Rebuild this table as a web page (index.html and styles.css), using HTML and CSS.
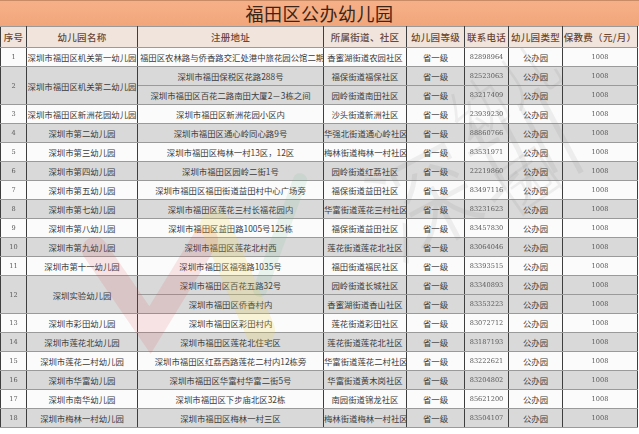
FILE: index.html
```html
<!DOCTYPE html>
<html lang="zh">
<head>
<meta charset="utf-8">
<title>福田区公办幼儿园</title>
<link rel="stylesheet" href="styles.css">
</head>
<body>
<div class="page">
  <div class="title">福田区公办幼儿园</div>
  <table class="grid">
    <colgroup>
      <col class="c-no"><col class="c-name"><col class="c-addr"><col class="c-street"><col class="c-level"><col class="c-tel"><col class="c-type"><col class="c-fee">
    </colgroup>
    <thead>
      <tr class="head">
        <th>序号</th><th>幼儿园名称</th><th>注册地址</th><th>所属街道、社区</th><th>幼儿园等级</th><th>联系电话</th><th>幼儿园类型</th><th>保教费（元/月）</th>
      </tr>
    </thead>
    <tbody>
      <tr class="w"><td class="num">1</td><td>深圳市福田区机关第一幼儿园</td><td class="clip">福田区农林路与侨香路交汇处港中旅花园公馆二期</td><td>香蜜湖街道农园社区</td><td>省一级</td><td class="num">82898964</td><td>公办园</td><td class="num">1008</td></tr>
      <tr class="g"><td class="num" rowspan="2">2</td><td rowspan="2">深圳市福田区机关第二幼儿园</td><td>深圳市福田保税区花路288号</td><td>福保街道福保社区</td><td>省一级</td><td class="num">82523063</td><td>公办园</td><td class="num">1008</td></tr>
      <tr class="g"><td>深圳市福田区百花二路南田大厦2－3栋之间</td><td>园岭街道南田社区</td><td>省一级</td><td class="num">83217409</td><td>公办园</td><td class="num">1008</td></tr>
      <tr class="w"><td class="num">3</td><td>深圳市福田区新洲花园幼儿园</td><td>深圳市福田区新洲花园小区内</td><td>沙头街道新洲社区</td><td>省一级</td><td class="num">23939230</td><td>公办园</td><td class="num">1008</td></tr>
      <tr class="g"><td class="num">4</td><td>深圳市第二幼儿园</td><td>深圳市福田区通心岭同心路9号</td><td>华强北街道通心岭社区</td><td>省一级</td><td class="num">88860766</td><td>公办园</td><td class="num">1008</td></tr>
      <tr class="w"><td class="num">5</td><td>深圳市第三幼儿园</td><td>深圳市福田区梅林一村13区，12区</td><td>梅林街道梅林一村社区</td><td>省一级</td><td class="num">83531971</td><td>公办园</td><td class="num">1008</td></tr>
      <tr class="g"><td class="num">6</td><td>深圳市第四幼儿园</td><td>深圳市福田区园岭二街1号</td><td>园岭街道红荔社区</td><td>省一级</td><td class="num">22219860</td><td>公办园</td><td class="num">1008</td></tr>
      <tr class="w"><td class="num">7</td><td>深圳市第五幼儿园</td><td>深圳市福田区福田街道益田村中心广场旁</td><td>福保街道益田社区</td><td>省一级</td><td class="num">83497116</td><td>公办园</td><td class="num">1008</td></tr>
      <tr class="g"><td class="num">8</td><td>深圳市第七幼儿园</td><td>深圳市福田区莲花三村长福花园内</td><td>华富街道莲花三村社区</td><td>省一级</td><td class="num">83231623</td><td>公办园</td><td class="num">1008</td></tr>
      <tr class="w"><td class="num">9</td><td>深圳市第八幼儿园</td><td>深圳市福田区益田路1005号125栋</td><td>福保街道益田社区</td><td>省一级</td><td class="num">83457830</td><td>公办园</td><td class="num">1008</td></tr>
      <tr class="g"><td class="num">10</td><td>深圳市第九幼儿园</td><td>深圳市福田区莲花北村西</td><td>莲花街道莲花北社区</td><td>省一级</td><td class="num">83064046</td><td>公办园</td><td class="num">1008</td></tr>
      <tr class="w"><td class="num">11</td><td>深圳市第十一幼儿园</td><td>深圳市福田区福强路1035号</td><td>福田街道福民社区</td><td>省一级</td><td class="num">83393515</td><td>公办园</td><td class="num">1008</td></tr>
      <tr class="g"><td class="num" rowspan="2">12</td><td rowspan="2">深圳实验幼儿园</td><td>深圳市福田区百花五路32号</td><td>园岭街道长城社区</td><td>省一级</td><td class="num">83340893</td><td>公办园</td><td class="num">1008</td></tr>
      <tr class="g"><td>深圳市福田区侨香村内</td><td>香蜜湖街道香山社区</td><td>省一级</td><td class="num">83353223</td><td>公办园</td><td class="num">1008</td></tr>
      <tr class="w"><td class="num">13</td><td>深圳市彩田幼儿园</td><td>深圳市福田区彩田村内</td><td>莲花街道彩田社区</td><td>省一级</td><td class="num">83072712</td><td>公办园</td><td class="num">1008</td></tr>
      <tr class="g"><td class="num">14</td><td>深圳市莲花北幼儿园</td><td>深圳市福田区莲花北住宅区</td><td>莲花街道莲花北社区</td><td>省一级</td><td class="num">83187193</td><td>公办园</td><td class="num">1008</td></tr>
      <tr class="w"><td class="num">15</td><td>深圳市莲花二村幼儿园</td><td>深圳市福田区红荔西路莲花二村内12栋旁</td><td>华富街道莲花二村社区</td><td>省一级</td><td class="num">83222621</td><td>公办园</td><td class="num">1008</td></tr>
      <tr class="g"><td class="num">16</td><td>深圳市华富幼儿园</td><td>深圳市福田区华富村华富二街5号</td><td>华富街道黄木岗社区</td><td>省一级</td><td class="num">83204802</td><td>公办园</td><td class="num">1008</td></tr>
      <tr class="w"><td class="num">17</td><td>深圳市南华幼儿园</td><td>深圳市福田区下步庙北区32栋</td><td>南园街道锦龙社区</td><td>省一级</td><td class="num">85621200</td><td>公办园</td><td class="num">1008</td></tr>
      <tr class="g"><td class="num">18</td><td>深圳市梅林一村幼儿园</td><td>深圳市福田区梅林一村三区</td><td>梅林街道梅林一村社区</td><td>省一级</td><td class="num">83504107</td><td>公办园</td><td class="num">1008</td></tr>
    </tbody>
  </table>
  <div class="mark" aria-hidden="true">
    <svg width="639" height="434" viewBox="0 0 639 434">
      <path d="M95 250 L150 330 L205 240" fill="none" stroke="#e23b3b" stroke-width="26" stroke-linecap="round" opacity="0.12"/>
      <path d="M215 225 L260 330" fill="none" stroke="#f2d23a" stroke-width="30" stroke-linecap="round" opacity="0.18"/>
      <path d="M300 180 L260 290" fill="none" stroke="#6cc08a" stroke-width="14" stroke-linecap="round" opacity="0.12"/>
    </svg>
    <span class="mark-text">深圳</span>
    <span class="mark-text small">幼儿园</span>
  </div>
</div>
</body>
</html>
```

FILE: styles.css
```css
html, body {
  margin: 0;
  padding: 0;
  background: #ffffff;
}

.page {
  position: relative;
  width: 639px;
  height: 434px;
  overflow: hidden;
  font-family: "Noto Sans CJK SC", "Noto Sans CJK TC", sans-serif;
  color: #3c3c3c;
}

.title {
  height: 26px;
  box-sizing: border-box;
  border-top: 1px solid #c98a66;
  background: linear-gradient(#f6b088, #f2a67a);
  color: #3b2518;
  font-size: 18px;
  line-height: 24px;
  text-align: center;
  letter-spacing: 0.5px;
}

.grid {
  width: 637px;
  margin-left: 0;
  border-collapse: collapse;
  table-layout: fixed;
  border-left: 1px solid #4a4a4a;
  border-bottom: 1px solid #8a8a8a;
}

.c-no { width: 26px; }
.c-name { width: 111px; }
.c-addr { width: 186px; }
.c-street { width: 83px; }
.c-level { width: 58px; }
.c-tel { width: 44px; }
.c-type { width: 54px; }
.c-fee { width: 75px; }

.grid th,
.grid td {
  padding: 0;
  text-align: center;
  vertical-align: middle;
  white-space: nowrap;
  overflow: hidden;
  border-left: 1px solid #3e3e3e;
  border-right: 1px solid #3e3e3e;
  border-top: 1px solid #9a9a9a;
  border-bottom: 1px solid #9a9a9a;
}

.head th {
  height: 20px;
  background: #f0e4dc;
  color: #6a4634;
  font-size: 9.5px;
  font-weight: 500;
  letter-spacing: 0.3px;
}

.grid td {
  height: 18px;
  font-size: 8.4px;
  line-height: 10px;
}

.grid td.clip {
  text-overflow: clip;
  text-align: left;
  padding-left: 2px;
}

.grid td.num {
  font-family: "DejaVu Serif", "Liberation Serif", serif;
  font-size: 6.6px;
  color: #5a5a5a;
  -webkit-text-stroke: 0;
  filter: grayscale(1);
}

tr.w td { background: #fbfbfb; }
tr.g td { background: #d9d9d9; }

.mark {
  position: absolute;
  left: 0;
  top: 0;
  width: 639px;
  height: 434px;
  pointer-events: none;
}

.mark svg {
  position: absolute;
  left: 0;
  top: 0;
}

.mark-text {
  position: absolute;
  left: 360px;
  top: 90px;
  font-size: 110px;
  color: #7a7a7a;
  opacity: 0.1;
  transform: rotate(-28deg);
  font-weight: 300;
}

.mark-text.small {
  left: 460px;
  top: 20px;
  font-size: 60px;
  transform: rotate(-35deg);
}
```
